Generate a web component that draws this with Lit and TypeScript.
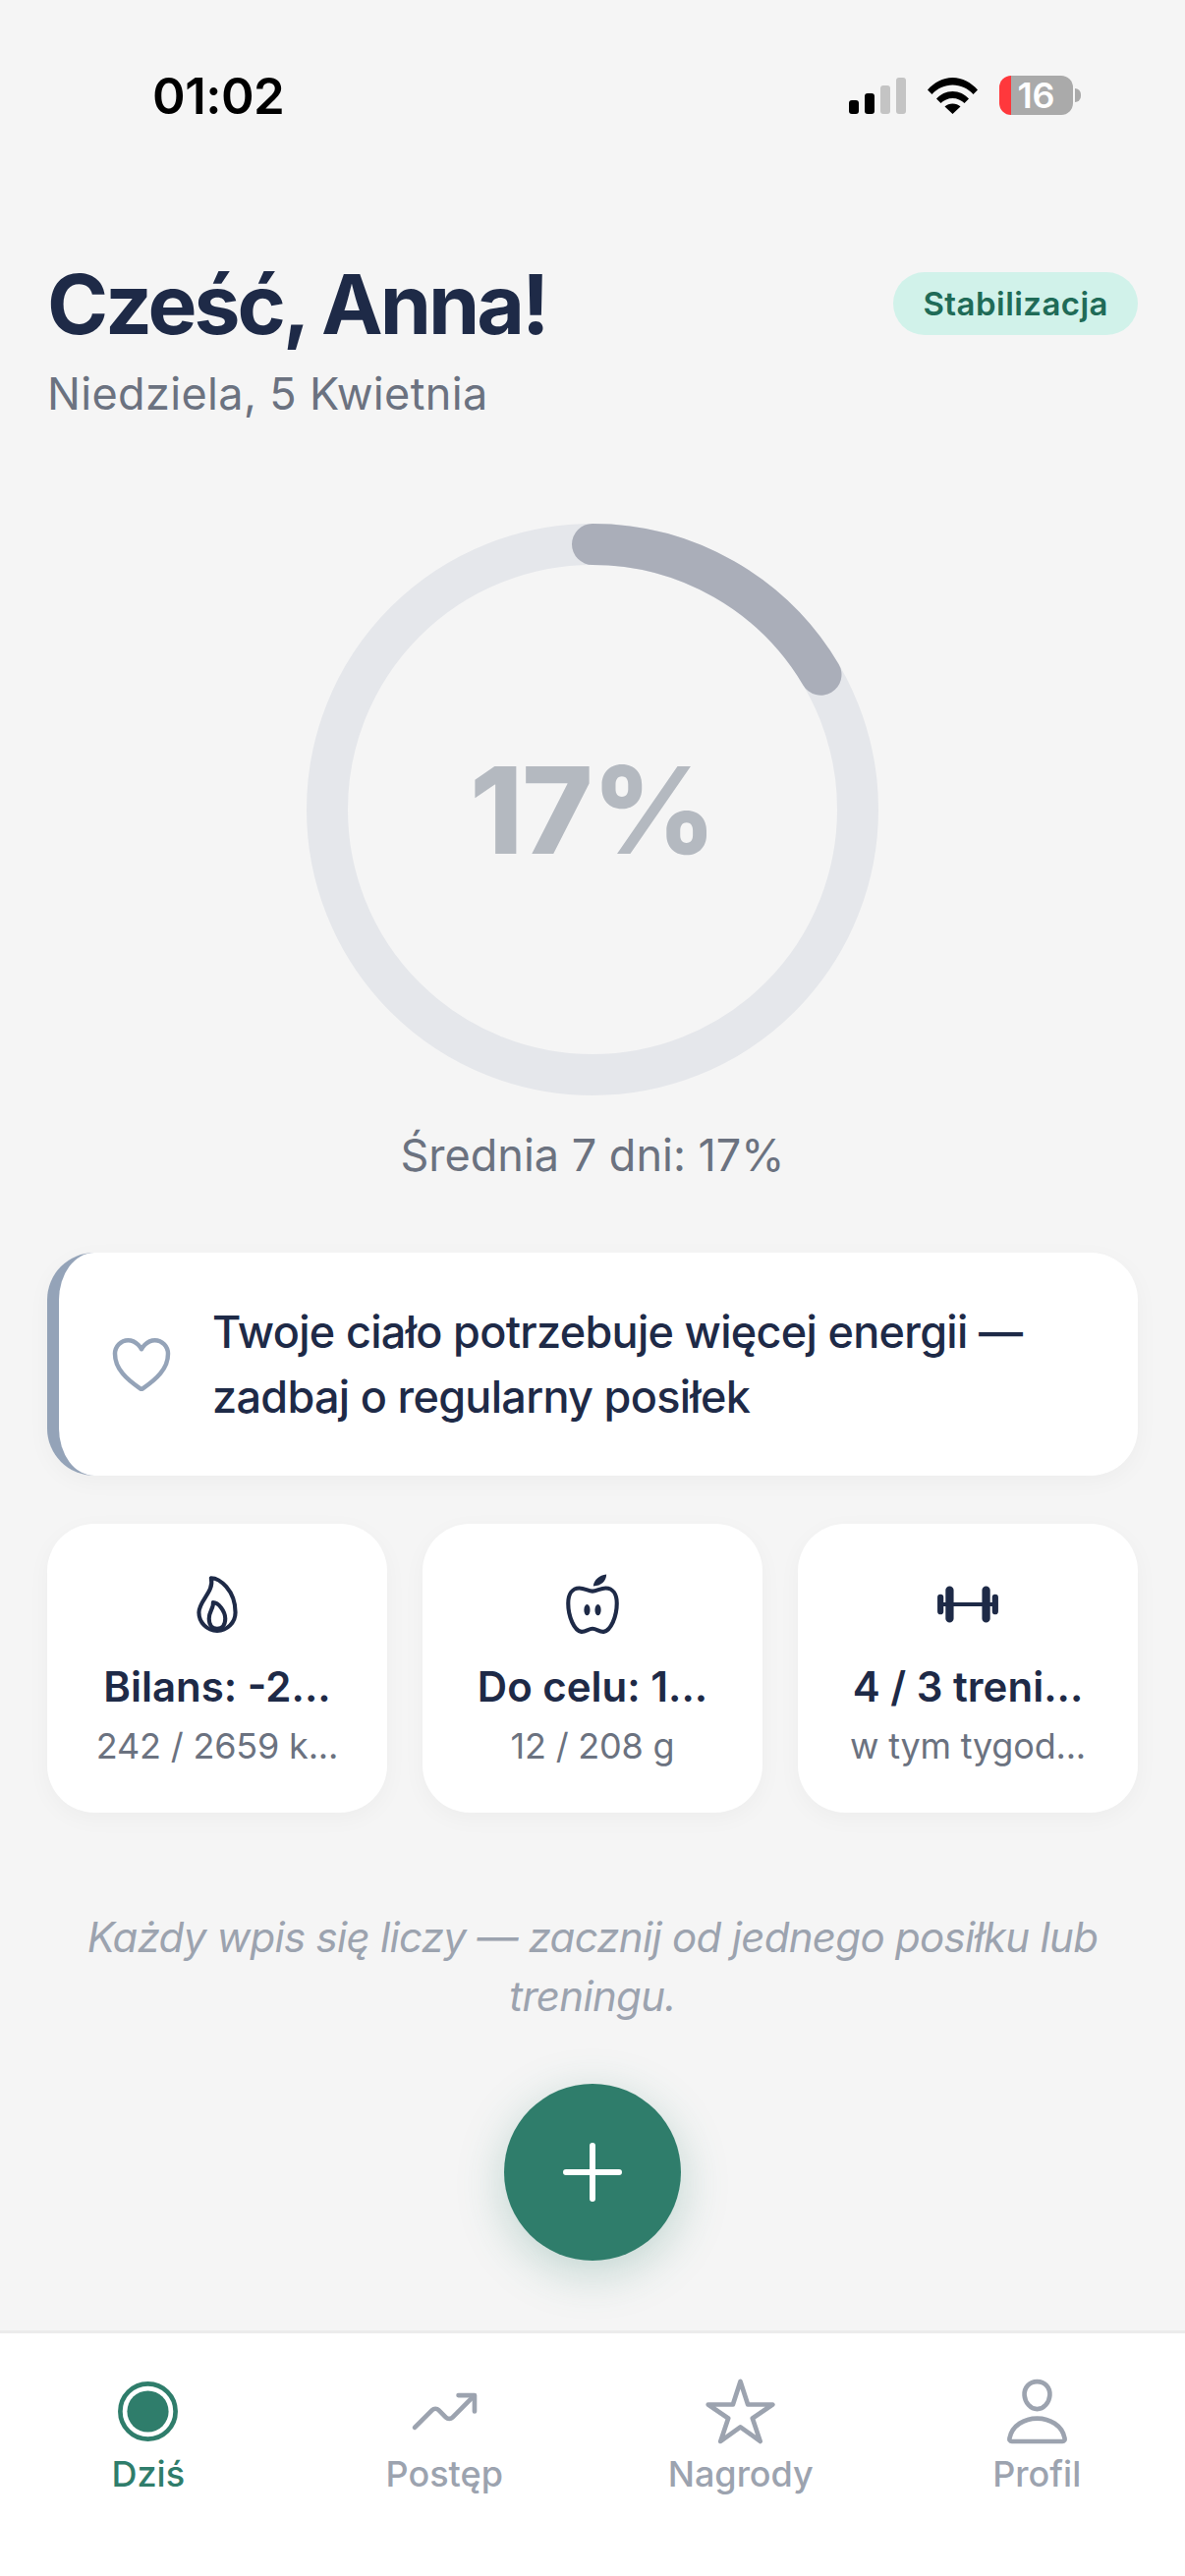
import { LitElement, html, css, svg } from "lit";
import { customElement } from "lit/decorators.js";

const ion = (size: number, body: unknown, cls = "") => html`<svg class="ion ${cls}" width=${size} height=${size} viewBox="0 0 512 512">${body}</svg>`;

const flame = svg`<path d="M112 320c0-93 124-165 96-272 66 0 192 96 192 272a144 144 0 01-288 0z"/><path d="M320 368c0 57.71-32 80-64 80s-64-22.29-64-80 40-86 32-128c42 0 96 70.29 96 128z"/>`;
const apple = svg`<path d="M256 152C224 152 192 128 152 128C96 128 64 176 64 248C64 352 112 464 168 472C200 476 224 448 256 448C288 448 312 476 344 472C400 464 448 352 448 248C448 176 416 128 360 128C320 128 288 152 256 152z"/><path d="M262 112C268 64 308 26 366 20C364 72 326 112 262 112z" class="solid"/><ellipse cx="213" cy="300" rx="24" ry="44" class="solid"/><ellipse cx="299" cy="300" rx="24" ry="44" class="solid"/>`;
const barbell = svg`<path d="M48 256h416"/><rect x="384" y="128" width="32" height="256" rx="16" ry="16"/><rect x="96" y="128" width="32" height="256" rx="16" ry="16"/><rect x="32" y="192" width="16" height="128" rx="8" ry="8"/><rect x="464" y="192" width="16" height="128" rx="8" ry="8"/>`;
const heart = svg`<path d="M352.92 80C288 80 256 144 256 144s-32-64-96.92-64c-52.76 0-94.54 44.14-95.08 96.81-1.1 109.33 86.73 187.08 183 252.42a16 16 0 0018 0c96.26-65.34 184.09-143.09 183-252.42-.54-52.67-42.32-96.81-95.08-96.81z"/>`;
const radio = svg`<path d="M448 256c0-106-86-192-192-192S64 150 64 256s86 192 192 192 192-86 192-192z"/><circle cx="256" cy="256" r="144" class="solid"/>`;
const trend = svg`<path d="M352 144h112v112"/><path d="M48 368l121.37-121.37a32 32 0 0145.26 0l50.74 50.74a32 32 0 0045.26 0L448 160"/>`;
const star = svg`<path d="M480 208H308L256 48l-52 160H32l140 96-54 160 138-100 138 100-54-160z"/>`;
const person = svg`<path d="M344 144c-3.92 52.87-44 96-88 96s-84.15-43.12-88-96c-4-55 35-96 88-96s92 42 88 96z"/><path d="M256 304c-87 0-175.3 48-191.64 138.6C62.39 453.52 68.57 464 80 464h352c11.44 0 17.62-10.48 15.65-21.4C431.3 352 343 304 256 304z"/>`;

const stats = [
  { icon: flame, title: "Bilans: -2...", sub: "242 / 2659 k..." },
  { icon: apple, title: "Do celu: 1...", sub: "12 / 208 g" },
  { icon: barbell, title: "4 / 3 treni...", sub: "w tym tygod..." },
];
const tabs = [
  { icon: radio, label: "Dziś", active: true },
  { icon: trend, label: "Postęp" },
  { icon: star, label: "Nagrody" },
  { icon: person, label: "Profil" },
];

const R = 270;
const C = 2 * Math.PI * R;
const PCT = 0.165;

@customElement("app-root")
export class AppRoot extends LitElement {
  static styles = css`
    :host { display: block; width: 1206px; height: 2622px; background: #f5f5f5; font-family: Inter, "Noto Sans", sans-serif; overflow: hidden; }
    .page { display: flex; flex-direction: column; height: 2622px; }
    .status { display: flex; align-items: center; justify-content: space-between; height: 37px; margin-top: 79px; padding: 0 106px 0 155px; }
    .time { font-family: Inter, sans-serif; font-weight: 600; font-size: 51px; line-height: 37px; color: #000; letter-spacing: -0.5px; }
    .sys { display: flex; align-items: flex-end; height: 37px; }
    .bars { display: flex; align-items: flex-end; gap: 6px; margin-right: 22px; }
    .bars i { display: block; width: 10px; border-radius: 3px; background: #c4c4c4; }
    .bars i.on { background: #000; }
    .wifi { display: block; margin-right: 22px; }
    .batt { display: flex; align-items: center; margin-bottom: -1px; }
    .cell { width: 75px; height: 40px; border-radius: 12px; background: linear-gradient(90deg, #ff383c 12px, #aaaaaa 12px); display: flex; align-items: center; justify-content: center; color: #fff; font-weight: 600; font-size: 36px; line-height: 40px; }
    .nub { width: 6px; height: 14px; margin-left: 2px; border-radius: 0 7px 7px 0; background: #aaaaaa; }
    .head { display: flex; justify-content: space-between; align-items: flex-start; padding: 0 48px; margin-top: 148px; }
    h1 { margin: 0; font-size: 84px; line-height: 92px; font-weight: 700; color: #1e2a47; letter-spacing: -3.05px; }
    .date { margin-top: 15px; font-size: 45px; line-height: 60px; color: #6b7280; letter-spacing: 0.35px; }
    .pill { margin-top: 13px; height: 64px; padding: 0 30px; border-radius: 32px; background: #d1f2ea; color: #1f6b57; font-weight: 600; font-size: 33px; line-height: 64px; letter-spacing: 0.45px; }
    .ring { position: relative; align-self: center; width: 582px; height: 582px; margin-top: 102px; flex: none; }
    .ring svg { display: block; }
    .ring .pct { position: absolute; inset: 0; display: flex; align-items: center; justify-content: center; font-weight: 800; font-size: 123px; color: #b4b9c0; letter-spacing: -1px; }
    .avg { margin-top: 31px; text-align: center; font-size: 45px; line-height: 60px; color: #6b7280; }
    .note { display: flex; align-items: center; gap: 36px; margin: 69px 48px 0; height: 227px; box-sizing: border-box; padding: 0 48px; background: #fff; border-left: 12px solid #94a3b8; border-radius: 48px; box-shadow: 0 6px 24px rgba(0,0,0,.035); flex: none; }
    .note .txt { font-size: 45px; line-height: 66px; font-weight: 500; color: #1e2a47; letter-spacing: -0.7px; }
    .ion { flex: none; display: block; fill: none; stroke: currentColor; stroke-width: 32; stroke-linecap: round; stroke-linejoin: round; }
    .ion .solid { fill: currentColor; stroke: none; }
    .heart { color: #94a3b8; }
    .cards { display: grid; grid-template-columns: repeat(3, 1fr); gap: 36px; margin: 49px 48px 0; flex: none; }
    .card { display: flex; flex-direction: column; align-items: center; min-width: 0; height: 294px; box-sizing: border-box; padding: 49px 24px 0; background: #fff; border-radius: 48px; box-shadow: 0 6px 24px rgba(0,0,0,.035); color: #1e2a47; }
    .t, .s { text-align: center; white-space: nowrap; }
    .t { margin-top: 24px; font-size: 42px; line-height: 54px; font-weight: 600; color: #1e2a47; }
    .s { margin-top: 9px; font-size: 36px; line-height: 48px; color: #6b7280; letter-spacing: -0.2px; }
    .hint { margin: 97px 48px 0; text-align: center; font-style: italic; font-size: 42px; line-height: 60px; color: #9ca3af; letter-spacing: -0.7px; }
    .fab { align-self: center; display: flex; align-items: center; justify-content: center; width: 180px; height: 180px; margin-top: 59px; border-radius: 50%; background: #2f7d6b; box-shadow: 0 12px 48px rgba(47,125,107,.27); flex: none; }
    .tabs { display: grid; grid-template-columns: repeat(4, 1fr); margin-top: auto; height: 250px; box-sizing: border-box; padding-top: 42px; background: #fff; border-top: 3px solid #ebebeb; flex: none; }
    .tab { display: flex; flex-direction: column; align-items: center; color: #9ca3af; font-size: 36px; line-height: 44px; font-weight: 500; }
    .tab.active { color: #2f7d6b; }
    .tab span { margin-top: 4px; }
  `;

  render() {
    return html`<div class="page">
      <div class="status">
        <div class="time">01:02</div>
        <div class="sys">
          <div class="bars"><i class="on" style="height:14px"></i><i class="on" style="height:21px"></i><i style="height:29px"></i><i style="height:37px"></i></div>
          <svg class="wifi" width="51" height="37" viewBox="0 0 51 37"><path fill="#000" d="M0 12.5C6.5 5 15.5 0 25.5 0S44.500 5 51 12.500L46.500 17C41 11 33.500 7.500 25.500 7.500S10 11 4.500 17zM9 21.500C13 17 19 14 25.500 14S38 17 42 21.500L37.500 26C34.500 23 30 21 25.500 21S16.500 23 13.500 26zM17.500 29.500C19.500 27.500 22.500 26.500 25.500 26.500S31.500 27.500 33.500 29.500L25.500 37z"/></svg>
          <div class="batt"><div class="cell">16</div><div class="nub"></div></div>
        </div>
      </div>
      <div class="head">
        <div><h1>Cześć, Anna!</h1><div class="date">Niedziela, 5 Kwietnia</div></div>
        <div class="pill">Stabilizacja</div>
      </div>
      <div class="ring">
        <svg width="582" height="582" viewBox="0 0 582 582">
          <circle cx="291" cy="291" r=${R} fill="none" stroke="#e5e7eb" stroke-width="42"/>
          <circle cx="291" cy="291" r=${R} fill="none" stroke="#aaaeb9" stroke-width="42" stroke-linecap="round" stroke-dasharray="${C * PCT} ${C}" transform="rotate(-90 291 291)"/>
        </svg>
        <div class="pct">17%</div>
      </div>
      <div class="avg">Średnia 7 dni: 17%</div>
      <div class="note">
        ${ion(72, heart, "heart")}
        <div class="txt">Twoje ciało potrzebuje więcej energii — zadbaj o regularny posiłek</div>
      </div>
      <div class="cards">
        ${stats.map((c) => html`<div class="card">${ion(66, c.icon)}<div class="t">${c.title}</div><div class="s">${c.sub}</div></div>`)}
      </div>
      <div class="hint">Każdy wpis się liczy — zacznij od jednego posiłku lub treningu.</div>
      <div class="fab"><svg width="60" height="60" viewBox="0 0 60 60"><path d="M30 3v54M3 30h54" stroke="#fff" stroke-width="6" stroke-linecap="round"/></svg></div>
      <div class="tabs">
        ${tabs.map((t) => html`<div class="tab ${t.active ? "active" : ""}">${ion(75, t.icon)}<span>${t.label}</span></div>`)}
      </div>
    </div>`;
  }
}
